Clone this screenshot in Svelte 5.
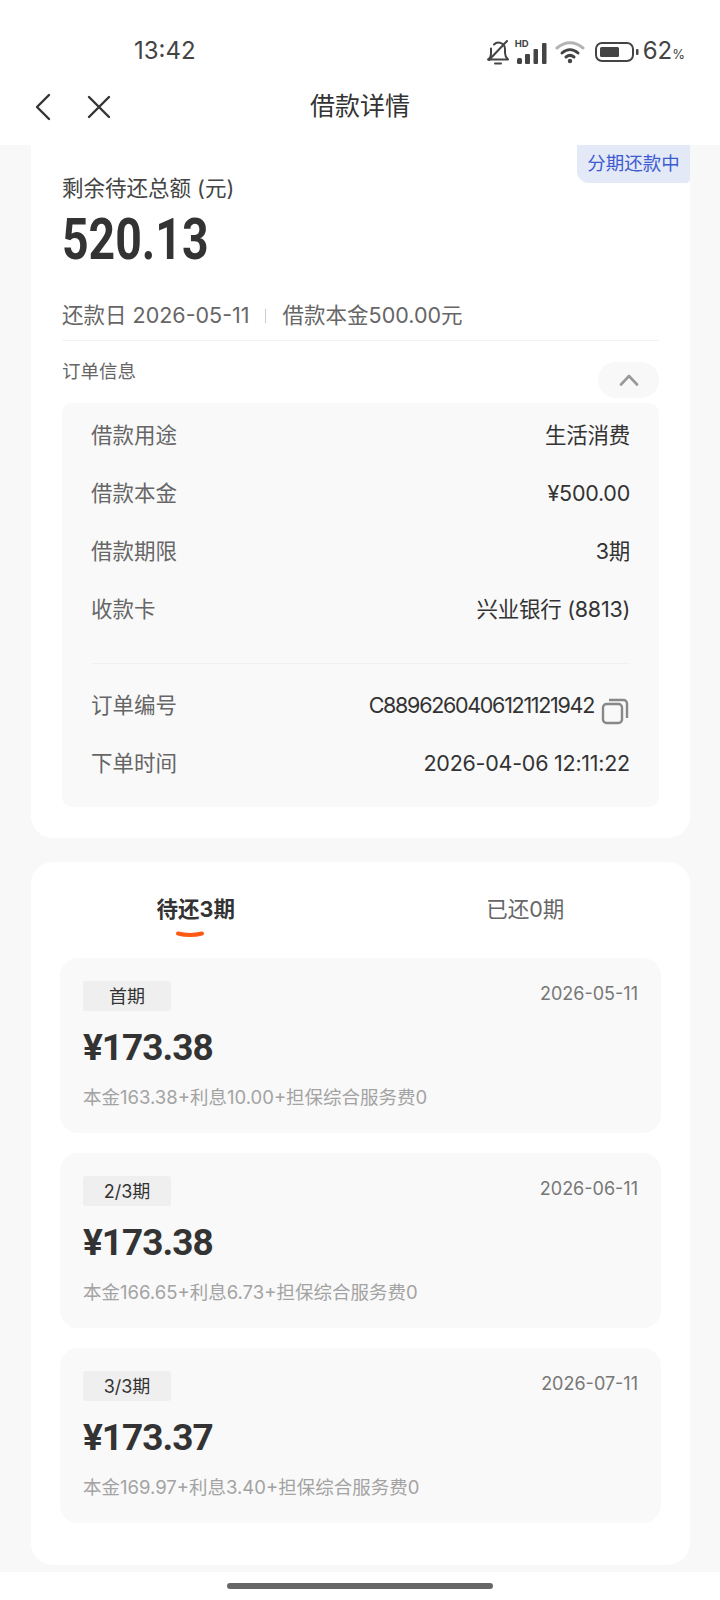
<script>
	const orderRows = [
		['借款用途', '生活消费'],
		['借款本金', '¥500.00'],
		['借款期限', '3期'],
		['收款卡', '兴业银行 (8813)']
	];

	const plans = [
		{ tag: '首期', date: '2026-05-11', amount: '¥173.38', detail: '本金163.38+利息10.00+担保综合服务费0' },
		{ tag: '2/3期', date: '2026-06-11', amount: '¥173.38', detail: '本金166.65+利息6.73+担保综合服务费0' },
		{ tag: '3/3期', date: '2026-07-11', amount: '¥173.37', detail: '本金169.97+利息3.40+担保综合服务费0' }
	];
</script>

<div class="page">
	<header class="top">
		<div class="status">
			<span class="clock">13:42</span>
			<div class="status-right">
				<svg class="bell" viewBox="0 0 24 26" width="24" height="26" fill="none" stroke="#444" stroke-width="2" stroke-linecap="round" stroke-linejoin="round">
					<path d="M2 20.500h20c-2-2-3-3.500-3-6.500V10a6.500 6.500 0 0 0-11-4.500M5 9.500V15c0 2.500-1 4-3 5.500" />
					<path d="M9 24.500h6" />
					<path d="M3 21 21 2" />
				</svg>
				<div class="signal">
					<span class="hd">HD</span>
					<svg viewBox="0 0 32 24" width="32" height="24" fill="#444">
						<rect x="2" y="18" width="5" height="6" rx="1.500" />
						<rect x="10" y="14" width="5" height="10" rx="1" />
						<rect x="18.500" y="9" width="4.500" height="15" rx="1" />
						<rect x="27" y="3" width="4.500" height="21" rx="1" />
					</svg>
				</div>
				<svg class="wifi" viewBox="0 0 30 24" width="30" height="24" fill="none" stroke-width="3" stroke-linecap="round">
					<path d="M2 8c8-7 18-7 26 0" stroke="#b4b4b4" />
					<path d="M7 13c5-4.500 11-4.500 16 0" stroke="#444" />
					<path d="M11 17c2.500-2 5.500-2 8 0" stroke="#444" />
					<circle cx="15" cy="21" r="2.200" fill="#444" />
				</svg>
				<svg class="battery" viewBox="0 0 44 20" width="44" height="20" fill="none">
					<rect x="1" y="1" width="37" height="18" rx="6" stroke="#444" stroke-width="2" />
					<rect x="5" y="5" width="19" height="10" rx="1.500" fill="#444" />
					<rect x="41" y="7" width="2.500" height="6" rx="1" fill="#444" />
				</svg>
				<span class="pct">62<small>%</small></span>
			</div>
		</div>
		<nav class="bar">
			<svg class="back" viewBox="0 0 18 28" width="18" height="28" fill="none" stroke="#333" stroke-width="2.400" stroke-linecap="round" stroke-linejoin="round">
				<path d="M15 2 3 14l12 12" />
			</svg>
			<svg class="close" viewBox="0 0 26 26" width="26" height="26" fill="none" stroke="#333" stroke-width="2.400" stroke-linecap="round">
				<path d="M3 3l20 20M23 3 3 23" />
			</svg>
			<h1>借款详情</h1>
		</nav>
	</header>

	<main class="scroll">
		<section class="card summary">
			<span class="state">分期还款中</span>
			<p class="total-label">剩余待还总额 (元)</p>
			<p class="total">520.13</p>
			<p class="meta">还款日 2026-05-11<i></i>借款本金500.00元</p>
			<div class="order-head">
				<span>订单信息</span>
				<button class="chip" aria-label="收起">
					<svg viewBox="0 0 20 12" width="20" height="12" fill="none" stroke="#999" stroke-width="2.600" stroke-linecap="round" stroke-linejoin="round">
						<path d="M2 10.500 10 2l8 8.500" />
					</svg>
				</button>
			</div>
			<div class="panel">
				{#each orderRows as row}
					<div class="row"><span>{row[0]}</span><b>{row[1]}</b></div>
				{/each}
				<hr />
				<div class="row">
					<span>订单编号</span>
					<b class="order-no">C8896260406121121942<svg viewBox="0 0 28 28" width="28" height="28" fill="none" stroke="#888" stroke-width="2.400" stroke-linejoin="round">
							<rect x="2" y="7" width="19" height="19" rx="3.500" />
							<path d="M8 3h14.500A3.500 3.500 0 0 1 26 6.500V21" />
						</svg></b>
				</div>
				<div class="row"><span>下单时间</span><b>2026-04-06 12:11:22</b></div>
			</div>
		</section>

		<section class="card plans">
			<div class="tabs">
				<div class="tab on">
					待还3期
					<svg viewBox="0 0 28 8" width="28" height="8" fill="none" stroke="#ff5a14" stroke-width="4" stroke-linecap="round">
						<path d="M2 2.500q12 3 24 0" />
					</svg>
				</div>
				<div class="tab">已还0期</div>
			</div>
			{#each plans as plan}
				<article class="plan">
					<div class="plan-top">
						<span class="tag">{plan.tag}</span>
						<span class="date">{plan.date}</span>
					</div>
					<p class="amount">{plan.amount}</p>
					<p class="detail">{plan.detail}</p>
				</article>
			{/each}
		</section>
	</main>

	<footer class="home"><span></span></footer>
</div>

<style>
	:global(body) {
		background: #fff;
	}

	.page {
		width: 720px;
		height: 1600px;
		display: flex;
		flex-direction: column;
		overflow: hidden;
		background: #fff;
		color: #333;
		font-family: Inter, 'Noto Sans CJK SC', sans-serif;
	}

	.top {
		height: 145px;
		flex: none;
		background: #fff;
	}

	.status {
		height: 84px;
		padding: 36px 35px 0 134px;
		box-sizing: border-box;
		display: flex;
		justify-content: space-between;
		align-items: flex-start;
	}

	.clock {
		font-size: 24px;
		line-height: 29px;
		color: #444;
	}

	.status-right {
		display: flex;
		align-items: center;
		height: 28px;
		margin-top: 2px;
	}

	.bell {
		margin-right: 5px;
	}

	.signal {
		margin-right: 8px;
		position: relative;
		width: 32px;
		height: 24px;
	}

	.signal svg {
		display: block;
	}

	.hd {
		position: absolute;
		left: 0;
		top: -2px;
		font-size: 9.500px;
		line-height: 11px;
		font-weight: 700;
		color: #444;
	}

	.wifi {
		margin-right: 10px;
	}

	.battery {
		margin-right: 4px;
	}

	.pct {
		font-size: 24px;
		color: #444;
		line-height: 28px;
	}

	.pct small {
		font-size: 13px;
	}

	.bar {
		height: 44px;
		display: flex;
		align-items: center;
		padding-left: 34px;
		position: relative;
	}

	.back {
		margin-top: 2px;
	}

	.close {
		margin-left: 34px;
		margin-top: 2px;
	}

	.bar h1 {
		position: absolute;
		left: 0;
		right: 0;
		top: 5px;
		margin: 0;
		text-align: center;
		font-size: 25px;
		line-height: 34px;
		font-weight: 400;
		color: #333;
	}

	.scroll {
		flex: 1;
		min-height: 0;
		background: #f8f8f8;
		padding: 0 30px 0 31px;
		display: flex;
		flex-direction: column;
		gap: 24px;
	}

	.card {
		background: #fff;
		border-radius: 0 0 22px 22px;
		position: relative;
	}

	.summary {
		height: 693px;
		box-sizing: border-box;
		padding: 31px 31px 0 31px;
		flex: none;
	}

	.state {
		position: absolute;
		top: 0;
		right: 0;
		width: 113px;
		height: 38px;
		box-sizing: border-box;
		padding: 0 0 5px;
		display: flex;
		align-items: center;
		justify-content: center;
		background: #e4e9f8;
		border-radius: 0 0 4px 12px;
		color: #3d5bd0;
		font-size: 18.500px;
	}

	.total-label {
		margin: 0;
		font-size: 21.500px;
		line-height: 24px;
		color: #444;
	}

	.total {
		margin: 4px 0 0;
		font-family: Roboto, sans-serif;
		font-size: 58px;
		line-height: 70px;
		font-weight: 700;
		color: #333;
		transform: scaleX(0.8);
		transform-origin: left center;
	}

	.meta {
		margin: 26px 0 0;
		font-size: 21.500px;
		line-height: 30px;
		color: #666;
		padding-bottom: 10px;
		border-bottom: 1px solid #f3f3f3;
	}

	.meta i {
		display: inline-block;
		width: 1px;
		height: 14px;
		background: #ccc;
		margin: 0 17px 0 15px;
	}

	.order-head {
		display: flex;
		justify-content: space-between;
		align-items: flex-start;
		height: 62px;
		font-size: 18.500px;
		color: #666;
	}

	.order-head span {
		margin-top: 16px;
	}

	.chip {
		margin-top: 21px;
		width: 61px;
		height: 36px;
		border: 0;
		border-radius: 18px;
		background: #f8f8f8;
		display: flex;
		align-items: center;
		justify-content: center;
		padding: 0;
	}

	.panel {
		background: #f9f9f9;
		border-radius: 10px;
		padding: 3px 29px 15px;
		height: 404px;
		box-sizing: border-box;
	}

	.row {
		height: 58px;
		line-height: 58px;
		display: flex;
		justify-content: space-between;
		align-items: baseline;
		font-size: 21.500px;
		color: #666;
	}

	.row b {
		font-weight: 400;
		color: #333;
		display: flex;
		align-items: center;
		letter-spacing: -0.250px;
	}

	.row b.order-no {
		letter-spacing: -1.300px;
	}

	.order-no svg {
		margin-left: 7px;
		margin-right: 1px;
		position: relative;
		top: 6px;
	}

	hr {
		border: 0;
		border-top: 1px solid #f1f1f1;
		margin: 25px 0 12px;
	}

	.plans {
		flex: 1;
		border-radius: 22px;
		padding: 0 29px;
		margin-bottom: 7px;
	}

	.tabs {
		display: grid;
		grid-template-columns: 1fr 1fr;
		height: 96px;
		margin: 0 -29px;
	}

	.tab {
		text-align: center;
		font-size: 21.500px;
		line-height: 28px;
		padding-top: 33px;
		color: #666;
		position: relative;
	}

	.tab.on {
		font-weight: 700;
		color: #333;
	}

	.tab svg {
		position: absolute;
		left: 50%;
		top: 69px;
		margin-left: -20px;
	}

	.plan {
		background: #f9f9f9;
		border-radius: 18px;
		height: 175px;
		box-sizing: border-box;
		padding: 23px 23px 0;
		margin-bottom: 20px;
	}

	.plan-top {
		display: flex;
		justify-content: space-between;
		align-items: flex-start;
	}

	.tag {
		width: 88px;
		height: 30px;
		padding-bottom: 3px;
		box-sizing: border-box;
		background: #efefef;
		border-radius: 3px;
		display: flex;
		align-items: center;
		justify-content: center;
		font-size: 18px;
		color: #333;
	}

	.date {
		font-size: 18px;
		line-height: 26px;
		color: #777;
	}

	.amount {
		margin: 12px 0 0;
		font-family: Roboto, sans-serif;
		font-size: 37px;
		line-height: 50px;
		font-weight: 700;
		letter-spacing: -1px;
		color: #333;
	}

	.detail {
		margin: 11px 0 0;
		font-size: 18.500px;
		line-height: 26px;
		color: #a3a3a3;
	}

	.home {
		height: 28px;
		flex: none;
		background: #fff;
		display: flex;
		justify-content: center;
		padding-top: 11px;
		box-sizing: border-box;
	}

	.home span {
		width: 266px;
		height: 6px;
		border-radius: 3px;
		background: #666;
	}
</style>
